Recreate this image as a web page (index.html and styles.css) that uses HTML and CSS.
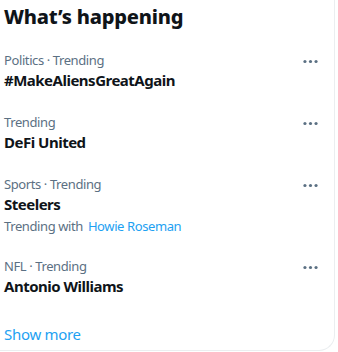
FILE: index.html
```html
<!DOCTYPE html>
<html lang="en">
<head>
  <meta charset="UTF-8" />
  <title>What's happening</title>
  <link rel="stylesheet" href="styles.css">
</head>
<body>
  <div class="panel">
    <h2>What’s happening</h2>

    <div class="trend">
      <div class="trend-text">
        <div class="meta">Politics · Trending</div>
        <div class="name">#MakeAliensGreatAgain</div>
      </div>
      <svg class="more" viewBox="0 0 24 24"><circle cx="5" cy="12" r="2"/><circle cx="12" cy="12" r="2"/><circle cx="19" cy="12" r="2"/></svg>
    </div>

    <div class="trend">
      <div class="trend-text">
        <div class="meta">Trending</div>
        <div class="name">DeFi United</div>
      </div>
      <svg class="more" viewBox="0 0 24 24"><circle cx="5" cy="12" r="2"/><circle cx="12" cy="12" r="2"/><circle cx="19" cy="12" r="2"/></svg>
    </div>

    <div class="trend">
      <div class="trend-text">
        <div class="meta">Sports · Trending</div>
        <div class="name">Steelers</div>
        <div class="meta with">Trending with <a href="#">Howie Roseman</a></div>
      </div>
      <svg class="more" viewBox="0 0 24 24"><circle cx="5" cy="12" r="2"/><circle cx="12" cy="12" r="2"/><circle cx="19" cy="12" r="2"/></svg>
    </div>

    <div class="trend">
      <div class="trend-text">
        <div class="meta">NFL · Trending</div>
        <div class="name">Antonio Williams</div>
      </div>
      <svg class="more" viewBox="0 0 24 24"><circle cx="5" cy="12" r="2"/><circle cx="12" cy="12" r="2"/><circle cx="19" cy="12" r="2"/></svg>
    </div>

    <a class="show-more" href="#">Show more</a>
  </div>
</body>
</html>
```

FILE: styles.css
```css
body {
  margin: 0;
  background: #fff;
  font-family: "Noto Sans", "Open Sans", sans-serif;
  color: #0f1419;
}

.panel {
  width: 335px;
  height: 351px;
  border-right: 1px solid #ebeef0;
  border-bottom: 1px solid #ebeef0;
  border-radius: 0 0 16px 0;
  padding-left: 4px;
  box-sizing: border-box;
}

h2 {
  margin: 0 0 11px;
  padding: 5px 0 0;
  font-size: 20px;
  font-weight: 800;
  line-height: 24px;
  letter-spacing: -0.2px;
}

.trend {
  display: flex;
  justify-content: space-between;
  padding: 12px 14px 12px 0;
}

.meta {
  font-size: 13px;
  line-height: 16px;
  color: #5b7083;
  letter-spacing: -0.4px;
}

.name {
  font-size: 15px;
  font-weight: 700;
  line-height: 20px;
  padding-top: 2px;
  letter-spacing: -0.5px;
}

.with {
  padding-top: 4px;
}

.with a {
  color: #1da1f2;
  text-decoration: none;
  margin-left: 2px;
}

.more {
  width: 19px;
  height: 19px;
  fill: #5b7083;
}

.show-more {
  display: block;
  padding-top: 16px;
  font-size: 15px;
  line-height: 20px;
  color: #1da1f2;
  text-decoration: none;
  letter-spacing: -0.3px;
}
```
